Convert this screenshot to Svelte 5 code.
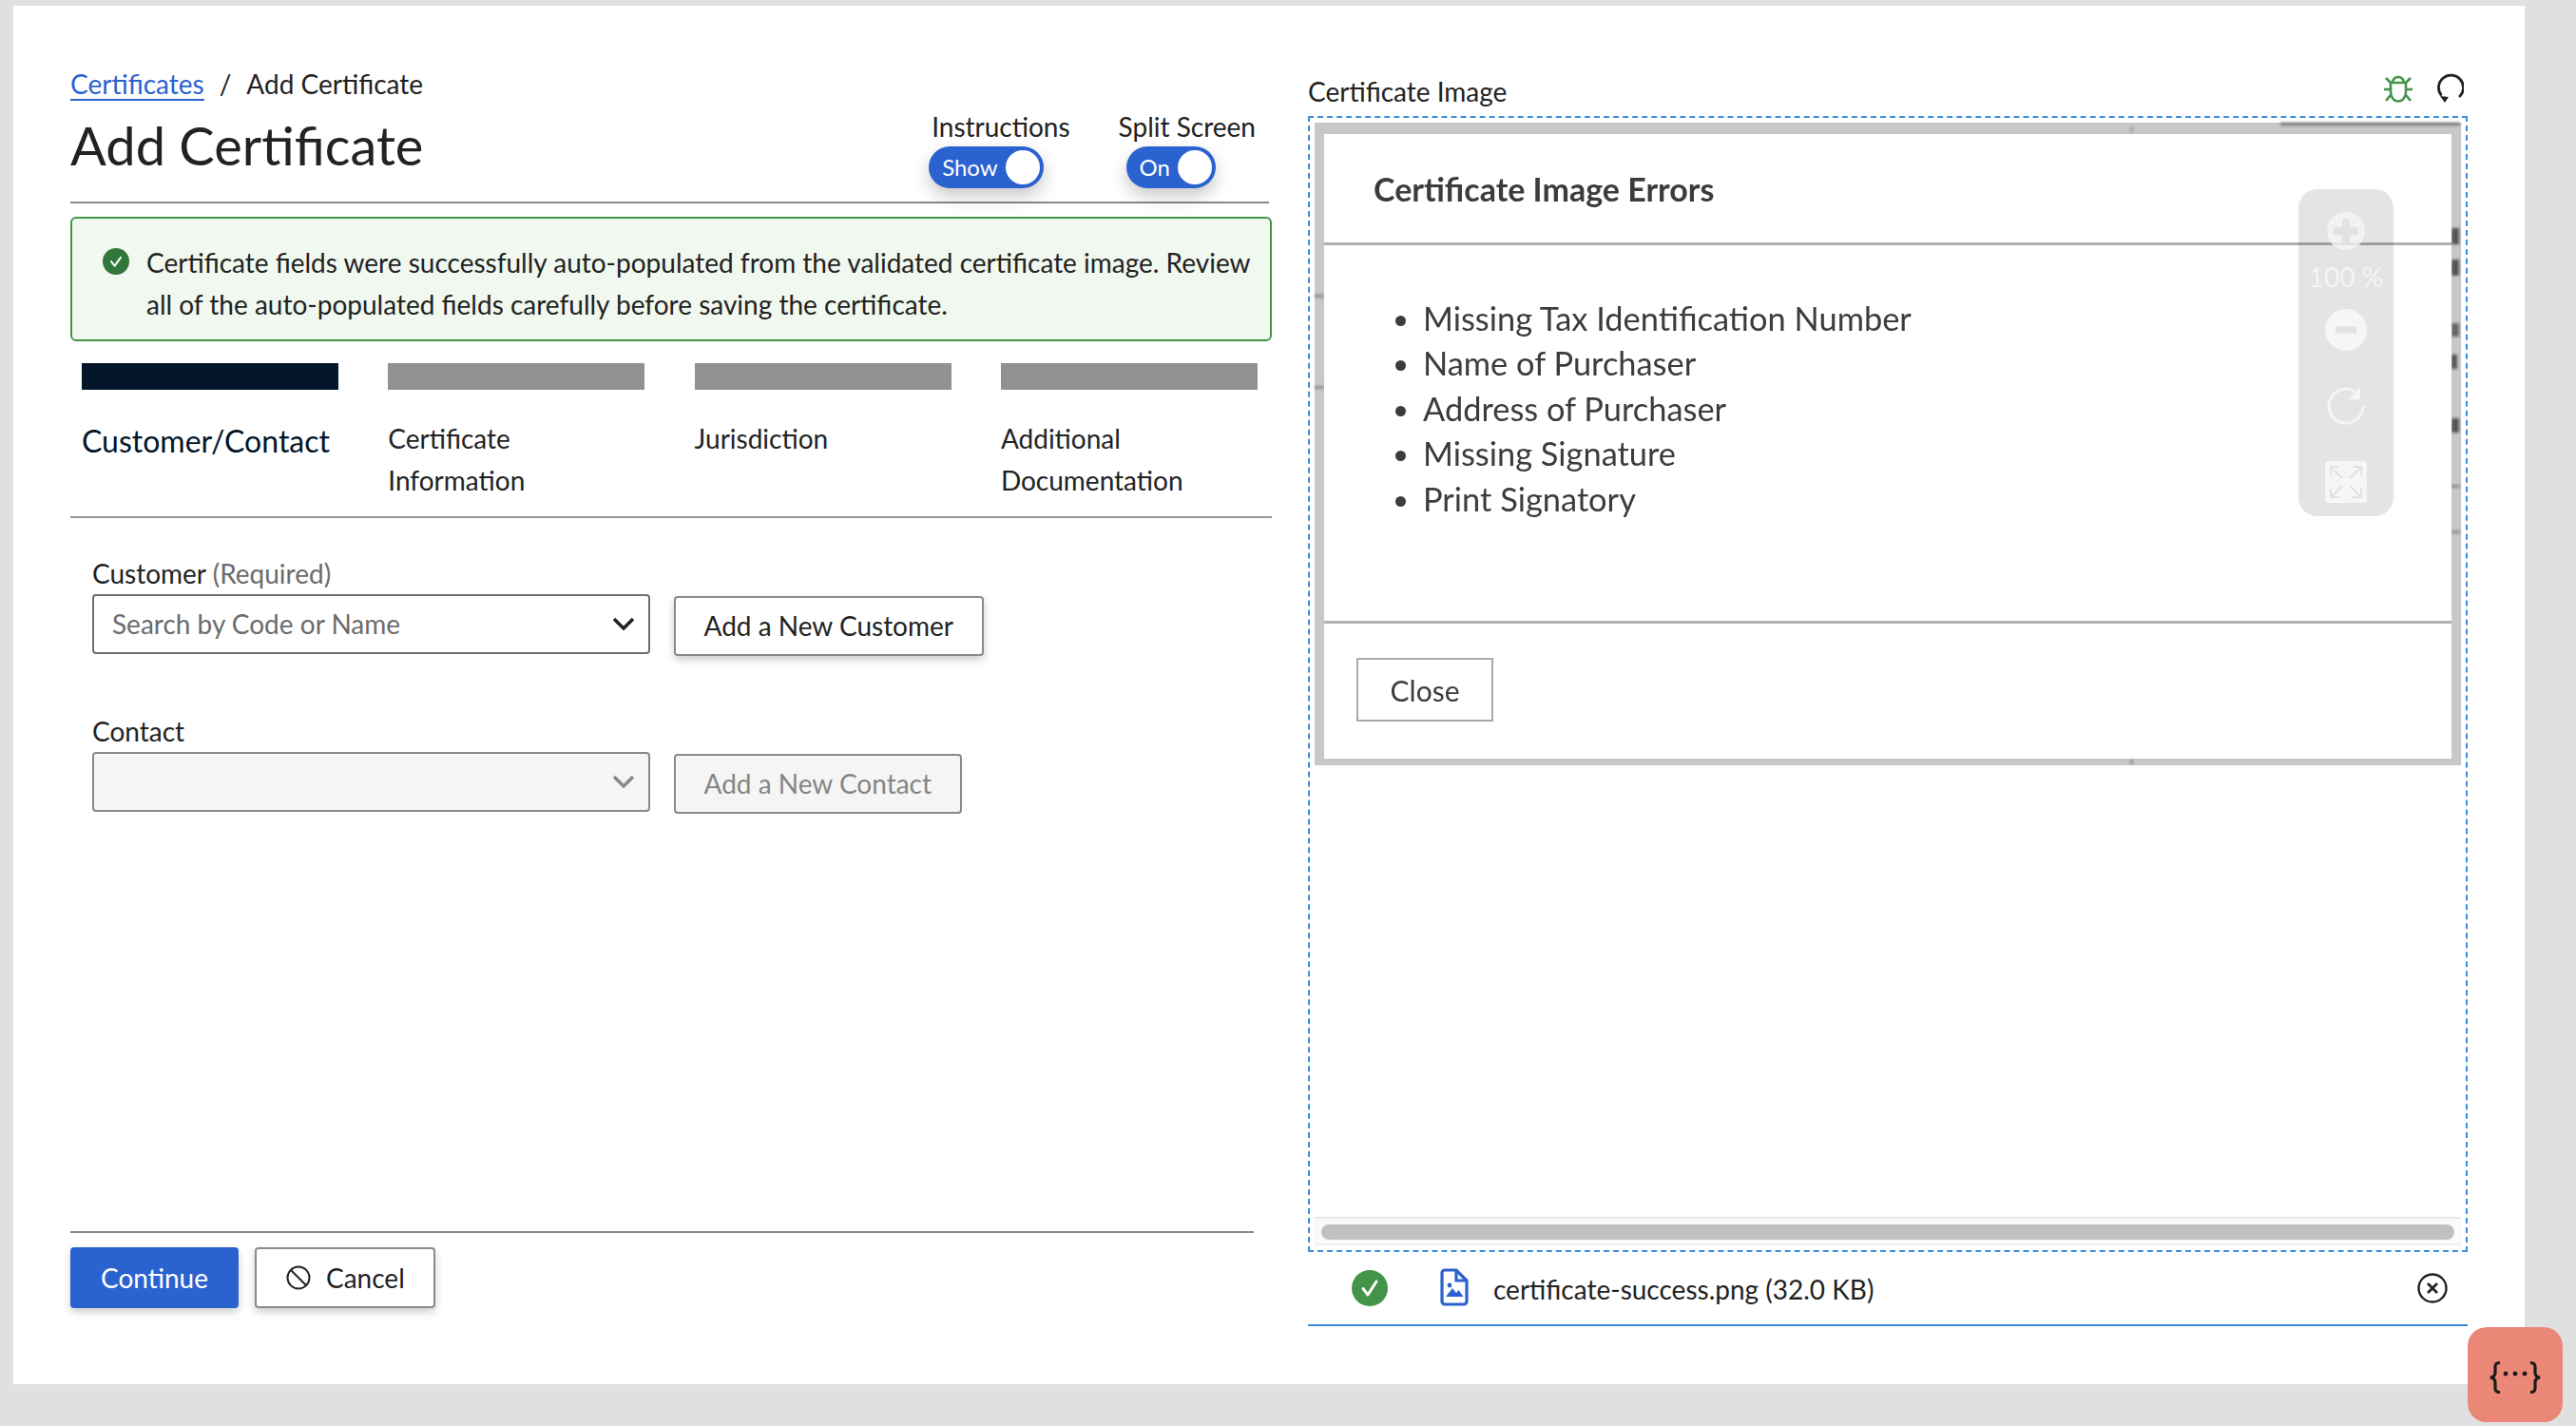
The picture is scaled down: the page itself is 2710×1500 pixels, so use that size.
<script lang="ts">
  const steps = [
    { label: 'Customer/Contact', active: true },
    { label: 'Certificate Information', active: false },
    { label: 'Jurisdiction', active: false },
    { label: 'Additional Documentation', active: false },
  ];

  const errors = [
    'Missing Tax Identification Number',
    'Name of Purchaser',
    'Address of Purchaser',
    'Missing Signature',
    'Print Signatory',
  ];

  // scraps of the scanned certificate that peek out around the modal
  const scraps = [
    { x: 0, y: 181, w: 10, h: 3, c: '#8a8a8a' },
    { x: 0, y: 277, w: 10, h: 3, c: '#8a8a8a' },
    { x: 858, y: 5, w: 3, h: 3, c: '#8f8f8f' },
    { x: 858, y: 10, w: 3, h: 2, c: '#9a9a9a' },
    { x: 1016, y: 0, w: 189, h: 3, c: '#777' },
    { x: 1196, y: 111, w: 8, h: 17, c: '#555' },
    { x: 1196, y: 144, w: 8, h: 17, c: '#555' },
    { x: 1196, y: 211, w: 8, h: 14, c: '#666' },
    { x: 1196, y: 244, w: 6, h: 15, c: '#555' },
    { x: 1196, y: 311, w: 8, h: 15, c: '#555' },
    { x: 1195, y: 381, w: 10, h: 3, c: '#8a8a8a' },
    { x: 1195, y: 429, w: 10, h: 3, c: '#8a8a8a' },
    { x: 858, y: 670, w: 3, h: 5, c: '#8f8f8f' },
  ];
</script>

<div class="page">
  <main class="card">
    <section class="left">
      <nav class="crumbs">
        <a href="#certificates">Certificates</a>
        <span class="sep">/</span>
        <span>Add Certificate</span>
      </nav>

      <header class="head">
        <h1>Add Certificate</h1>
        <div class="switches">
          <div class="switch first">
            <span class="switch-label">Instructions</span>
            <div class="toggle">Show<span class="knob"></span></div>
          </div>
          <div class="switch second">
            <span class="switch-label">Split Screen</span>
            <div class="toggle">On<span class="knob"></span></div>
          </div>
        </div>
      </header>

      <div class="alert">
        <svg class="alert-icon" viewBox="0 0 28 28">
          <circle cx="14" cy="14" r="14" fill="#31773a" />
          <path d="M9 14l3.6 4.6L19 9.8" fill="none" stroke="#fff" stroke-width="2" stroke-linecap="round" stroke-linejoin="round" />
        </svg>
        <p>Certificate fields were successfully auto-populated from the validated certificate image. Review all of the auto-populated fields carefully before saving the certificate.</p>
      </div>

      <ol class="steps">
        {#each steps as step}
          <li class:active={step.active}>
            <div class="bar"></div>
            <div class="step-label">{step.label}</div>
          </li>
        {/each}
      </ol>

      <form class="form">
        <label class="field-label" for="customer">Customer <span class="hint">(Required)</span></label>
        <div class="field-row">
          <div class="select" id="customer">
            <span class="placeholder">Search by Code or Name</span>
            <svg class="chevron" viewBox="0 0 24 14"><path d="M2 2l10 10L22 2" fill="none" stroke="#222" stroke-width="3.5" /></svg>
          </div>
          <button type="button" class="btn add">Add a New Customer</button>
        </div>

        <label class="field-label contact" for="contact">Contact</label>
        <div class="field-row">
          <div class="select disabled" id="contact">
            <svg class="chevron" viewBox="0 0 24 14"><path d="M2 2l10 10L22 2" fill="none" stroke="#888" stroke-width="3.5" /></svg>
          </div>
          <button type="button" class="btn add off">Add a New Contact</button>
        </div>
      </form>

      <footer class="actions">
        <button type="button" class="btn primary">Continue</button>
        <button type="button" class="btn cancel">
          <svg viewBox="0 0 26 26" width="26" height="26">
            <circle cx="13" cy="13" r="11.5" fill="none" stroke="#222" stroke-width="2" />
            <path d="M5 5l16 16" stroke="#222" stroke-width="2" />
          </svg>
          Cancel
        </button>
      </footer>
    </section>

    <section class="right">
      <div class="image-head">
        <span>Certificate Image</span>
        <div class="image-tools">
          <svg viewBox="0 0 30 32" width="30" height="32" fill="none" stroke="#43944a" stroke-width="2.6">
            <path d="M9 10a6 6 0 0 1 12 0" />
            <path d="M7 10h16v10a8 9.5 0 0 1-16 0z" />
            <path d="M2 5l5 5M28 5l-5 5M0 17h7M30 17h-7M2 29l5-6M28 29l-5-6" />
          </svg>
          <svg viewBox="0 0 28 32" width="28" height="32" fill="none">
            <path d="M23 25A13 13 0 1 0 4.500 23.500" stroke="#222" stroke-width="2.8" />
            <path d="M3 24l9 1-4 6z" fill="#222" />
          </svg>
        </div>
      </div>

      <div class="dropzone">
        <div class="scan">
          {#each scraps as s}
            <i class="scrap" style="left:{s.x}px;top:{s.y}px;width:{s.w}px;height:{s.h}px;background:{s.c}"></i>
          {/each}
          <div class="modal">
            <div class="modal-title">Certificate Image Errors</div>
            <ul class="modal-body">
              {#each errors as err}
                <li>{err}</li>
              {/each}
            </ul>
            <div class="modal-foot"><span class="close">Close</span></div>
          </div>

          <div class="zoom-panel">
            <svg class="zoom-icon" viewBox="0 0 40 40" width="40" height="40">
              <circle cx="20" cy="20" r="20" fill="#f5f5f5" fill-opacity="0.8" />
              <path d="M20 7v26M7 20h26" stroke="#e2e2e2" stroke-width="8" />
            </svg>
            <span class="zoom-value">100 %</span>
            <svg class="zoom-icon minus" viewBox="0 0 44 44" width="44" height="44">
              <circle cx="22" cy="22" r="22" fill="#f6f6f6" />
              <path d="M11 22h22" stroke="#e2e2e2" stroke-width="7" />
            </svg>
            <svg class="zoom-icon turn" viewBox="0 0 40 40" width="40" height="40" fill="none">
              <path d="M38 20.500A18 18 0 1 1 29 4.500" stroke="#f5f5f5" stroke-width="3.2" />
              <path d="M35 0v13H22z" fill="#f5f5f5" />
            </svg>
            <svg class="zoom-icon expand" viewBox="0 0 44 44" width="44" height="44" fill="none">
              <rect width="44" height="44" rx="4" fill="#f6f6f6" />
              <path d="M6 6l12 12M6 15V6h9M38 6L26 18M38 15V6h-9M6 38l12-12M6 29v9h9M38 38L26 26M38 29v9h-9" stroke="#e2e2e2" stroke-width="2" />
            </svg>
          </div>
        </div>

        <div class="scrollbar"><div class="thumb"></div></div>
      </div>

      <div class="file">
        <svg class="file-ok" viewBox="0 0 38 38" width="38" height="38">
          <circle cx="19" cy="19" r="19" fill="#43944a" />
          <path d="M12 19.5l5 6.5 9-14" fill="none" stroke="#fff" stroke-width="3" stroke-linecap="round" stroke-linejoin="round" />
        </svg>
        <svg class="file-type" viewBox="0 0 30 40" width="30" height="40" fill="none">
          <path d="M5 2h12l11 11v22a3 3 0 0 1-3 3H5a3 3 0 0 1-3-3V5a3 3 0 0 1 3-3z" stroke="#2a62d0" stroke-width="3.2" />
          <path d="M17 2v11h11" stroke="#2a62d0" stroke-width="3.2" />
          <circle cx="10" cy="18" r="2.4" fill="#2a62d0" />
          <path d="M6 30l7-9 4 5 2.500-3 5 7z" fill="#2a62d0" />
        </svg>
        <span class="file-name">certificate-success.png (32.0 KB)</span>
        <svg class="file-remove" viewBox="0 0 32 32" width="32" height="32" fill="none" stroke="#222">
          <circle cx="16" cy="16" r="14.500" stroke-width="2.400" />
          <path d="M11 11l10 10M21 11L11 21" stroke-width="2.800" />
        </svg>
      </div>
    </section>
  </main>

  <button type="button" class="fab" aria-label="Inspect data">
    <svg viewBox="0 0 56 34" width="56" height="34" fill="none" stroke="#1b1b1b" stroke-width="3.200">
      <path d="M12 1.500c-4 0-5 1.500-5 4.500v6c0 3-2 4.500-5 5 3 .5 5 2 5 5v6c0 3 1 4.500 5 4.500" />
      <path d="M44 1.500c4 0 5 1.500 5 4.500v6c0 3 2 4.500 5 5-3 .5-5 2-5 5v6c0 3-1 4.500-5 4.500" />
      <circle cx="18" cy="13" r="2.400" fill="#1b1b1b" stroke="none" />
      <circle cx="28" cy="13" r="2.400" fill="#1b1b1b" stroke="none" />
      <circle cx="38" cy="13" r="2.400" fill="#1b1b1b" stroke="none" />
    </svg>
  </button>
</div>

<style>
:global(body) {
  margin: 0;
  background: #e0e0e0;
}

.page {
  position: relative;
  height: 1500px;
  box-sizing: border-box;
  padding: 6px 54px 44px 14px;
  font-family: Lato, "Liberation Sans", sans-serif;
  font-size: 28px;
  line-height: 34px;
  color: #222;
}

.card {
  display: flex;
  height: 100%;
  box-sizing: border-box;
  padding: 65px 0 0 60px;
  background: #fff;
}

.left {
  display: flex;
  flex-direction: column;
  width: 1264px;
  flex-shrink: 0;
}

.crumbs {
  display: flex;
  gap: 16px;
}

.crumbs a {
  color: #2a62d0;
  text-decoration: none;
  border-bottom: 2px solid #2a62d0;
  height: 33px;
}

.head {
  display: flex;
  justify-content: space-between;
  height: 108px;
  box-sizing: border-box;
  padding-right: 14px;
  width: 1261px;
  border-bottom: 2px solid #888;
}

h1 {
  margin: 0;
  padding-top: 13px;
  font-size: 56px;
  line-height: 68px;
  font-weight: 400;
}

.switches {
  display: flex;
  gap: 51px;
  padding-top: 10px;
}

.switch {
  display: flex;
  flex-direction: column;
  gap: 4px;
}

.switch.first .switch-label {
  padding-left: 5px;
}

.switch.first .toggle {
  margin-left: 2px;
}

.switch.second .toggle {
  margin-left: 8px;
}

.toggle {
  display: flex;
  align-items: center;
  justify-content: space-between;
  align-self: flex-start;
  height: 44px;
  box-sizing: border-box;
  padding: 0 4px 0 14px;
  gap: 8px;
  border-radius: 22px;
  background: #2a62d0;
  color: #fff;
  font-size: 24px;
  box-shadow: 0 8px 18px rgba(0, 0, 0, 0.22);
}

.knob {
  width: 36px;
  height: 36px;
  border-radius: 50%;
  background: #fff;
}

.alert {
  display: flex;
  gap: 18px;
  margin-top: 14px;
  height: 131px;
  box-sizing: border-box;
  padding: 24px 10px 0 32px;
  border: 2px solid #43944a;
  border-radius: 6px;
  background: #f1f8ef;
}

.alert-icon {
  width: 28px;
  height: 28px;
  margin-top: 7px;
  flex-shrink: 0;
}

.alert p {
  margin: 0;
  line-height: 44px;
}

.steps {
  display: grid;
  grid-template-columns: repeat(4, 270px);
  column-gap: 52.3px;
  margin: 23px 0 0;
  padding: 0 12px 16px;
  list-style: none;
  border-bottom: 2px solid #999;
}

.bar {
  height: 28px;
  background: #919191;
}

.step-label {
  margin-top: 28.5px;
  line-height: 44px;
  min-height: 88px;
}

.active .bar {
  background: #03162a;
}

.active .step-label {
  padding-top: 3px;
  font-size: 32px;
  color: #03162a;
  box-sizing: border-box;
}

.form {
  padding: 41px 0 0 23px;
}

.field-label {
  display: block;
  margin-bottom: 5px;
}

.field-label.contact {
  margin-top: 62px;
}

.hint {
  color: #6b6b6b;
}

.field-row {
  display: flex;
  align-items: flex-start;
  gap: 25px;
}

.select {
  display: flex;
  align-items: center;
  justify-content: space-between;
  width: 587px;
  height: 63px;
  box-sizing: border-box;
  padding: 0 14px 0 19px;
  border: 2px solid #6f6f6f;
  border-radius: 4px;
  background: #fff;
}

.select.disabled {
  justify-content: flex-end;
  background: #f5f5f5;
  border-color: #8a8a8a;
}

.placeholder {
  color: #6b6b6b;
}

.chevron {
  width: 24px;
  height: 14px;
}

.btn {
  height: 63px;
  box-sizing: border-box;
  font: inherit;
  border-radius: 4px;
  cursor: pointer;
}

.add {
  margin-top: 2px;
  padding: 0 29.5px;
  color: #222;
  background: #fff;
  border: 2px solid #8a8a8a;
  box-shadow: 0 4px 8px rgba(0, 0, 0, 0.2);
}

.add.off {
  color: #858585;
  background: #f5f5f5;
  box-shadow: none;
}

.actions {
  display: flex;
  gap: 17px;
  margin-top: auto;
  margin-bottom: 80px;
  padding-top: 15px;
  width: 1245px;
  border-top: 2px solid #888;
}

.primary {
  width: 177px;
  height: 64px;
  color: #fff;
  background: #2a62d0;
  border: none;
  box-shadow: 0 4px 8px rgba(0, 0, 0, 0.2);
}

.cancel {
  display: flex;
  align-items: center;
  gap: 16px;
  width: 190px;
  height: 64px;
  padding: 0 0 0 31px;
  color: #222;
  background: #fff;
  border: 2px solid #8a8a8a;
  box-shadow: 0 4px 8px rgba(0, 0, 0, 0.2);
}

.right {
  display: flex;
  flex-direction: column;
  width: 1220px;
  margin-left: 38px;
  padding-top: 8px;
}

.image-head {
  display: flex;
  justify-content: space-between;
  height: 34px;
  margin-bottom: 9px;
}

.image-tools {
  display: flex;
  gap: 26px;
  padding-right: 4px;
  margin-top: -13px;
  height: 54px;
  align-items: center;
}

.dropzone {
  display: flex;
  flex-direction: column;
  justify-content: space-between;
  height: 1195px;
  box-sizing: border-box;
  padding: 5px;
  border: 2px dashed #3b8de0;
}

.scan {
  position: relative;
  height: 676px;
  box-sizing: border-box;
  padding: 12px 10px 7px;
  background: #c8c8c8;
}

.scrap {
  position: absolute;
  filter: blur(1.5px);
}

.modal {
  display: flex;
  flex-direction: column;
  height: 100%;
  background: #fff;
  color: #3c3c3c;
  filter: blur(0.7px);
}

.modal-title {
  height: 117px;
  box-sizing: border-box;
  padding: 35px 0 0 52px;
  font-size: 34px;
  line-height: 46px;
  font-weight: 700;
  border-bottom: 3px solid #b0b0b0;
}

.modal-body {
  flex: 1;
  margin: 0;
  padding: 53px 0 0 104px;
  font-size: 34.4px;
  line-height: 47.4px;
}

.modal-foot {
  height: 145px;
  box-sizing: border-box;
  padding: 36px 0 0 34px;
  border-top: 3px solid #b0b0b0;
}

.close {
  display: inline-flex;
  align-items: center;
  justify-content: center;
  width: 144px;
  height: 67px;
  box-sizing: border-box;
  border: 2px solid #aaa;
  font-size: 30px;
}

.zoom-panel {
  position: absolute;
  top: 70px;
  left: 1035px;
  width: 100px;
  height: 344px;
  display: flex;
  flex-direction: column;
  align-items: center;
  border-radius: 20px;
  background: rgba(0, 0, 0, 0.105);
}

.zoom-icon {
  display: block;
  position: absolute;
  top: 24px;
}

.zoom-value {
  position: absolute;
  top: 75px;
  color: #f5f5f5;
  white-space: nowrap;
}

.zoom-icon.minus {
  top: 126px;
}

.zoom-icon.turn {
  top: 208px;
}

.zoom-icon.expand {
  top: 286px;
}

.scrollbar {
  height: 30px;
  box-sizing: border-box;
  padding: 6px 7px 0;
  background: #fafafa;
  border-top: 2px solid #e8e8e8;
  border-bottom: 2px solid #f0f0f0;
}

.thumb {
  height: 16px;
  border-radius: 8px;
  background: #c0c0c0;
}

.file {
  display: flex;
  align-items: center;
  height: 78px;
  box-sizing: border-box;
  padding-left: 46px;
  border-bottom: 2px solid #3b8ad9;
}

.file-type {
  margin-left: 55px;
  margin-top: -2px;
}

.file-name {
  margin-left: 26px;
  margin-top: 2px;
}

.file-remove {
  margin-left: auto;
  margin-right: 21px;
}

.fab {
  position: absolute;
  left: 2596px;
  top: 1396px;
  width: 100px;
  height: 100px;
  padding: 6px 0 0;
  display: flex;
  align-items: center;
  justify-content: center;
  border: none;
  border-radius: 20px;
  background: #eb8776;
}
</style>
